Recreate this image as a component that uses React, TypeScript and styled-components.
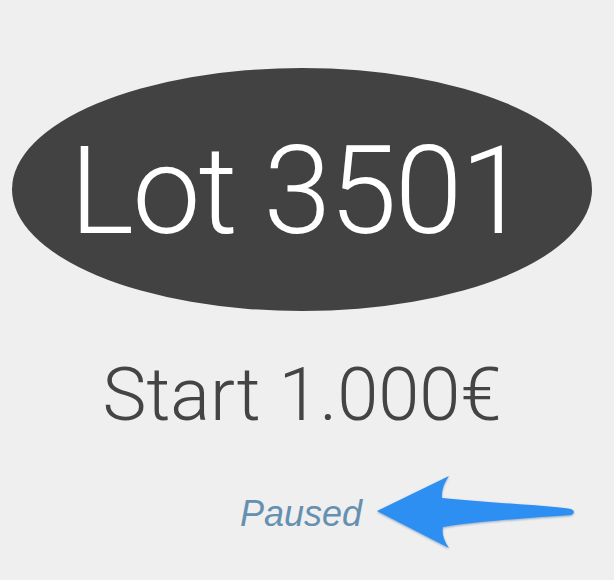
import React from "react";
import styled, { createGlobalStyle } from "styled-components";

const Global = createGlobalStyle`
  html, body { margin: 0; padding: 0; background: #efefef; }
  body { width: 614px; height: 580px; overflow: hidden; }
`;

const Page = styled.main`
  display: flex;
  flex-direction: column;
  align-items: flex-start;
  padding: 68px 0 0 12px;
  font-family: Roboto, "Noto Sans", sans-serif;
`;

const Badge = styled.div`
  width: 580px;
  height: 243px;
  border-radius: 50%;
  background: #424242;
  display: flex;
  align-items: center;
  justify-content: center;
  padding: 4px 8px 0 0;
  box-sizing: border-box;
`;

const LotTitle = styled.h1`
  margin: 0;
  font-weight: 300;
  font-size: 122px;
  letter-spacing: -2px;
  line-height: 1;
  color: #ffffff;
  white-space: nowrap;
`;

const StartPrice = styled.p`
  width: 580px;
  margin: 47px 0 0;
  text-align: center;
  font-weight: 300;
  font-size: 74px;
  line-height: 1;
  color: #444444;
  white-space: nowrap;
`;

const StatusRow = styled.div`
  display: flex;
  align-items: center;
  margin: 37px 0 0 228px;
`;

const StatusLabel = styled.span`
  font-family: "Liberation Sans", Arial, sans-serif;
  font-style: italic;
  font-size: 36px;
  color: #6690b0;
  line-height: 1;
`;

const Arrow = styled.svg`
  display: block;
  margin-left: 8px;
  filter: drop-shadow(0 1.5px 1px rgba(20, 80, 150, 0.45));
`;

export default function App() {
  return (
    <>
      <Global />
      <Page>
        <Badge>
          <LotTitle>Lot 3501</LotTitle>
        </Badge>
        <StartPrice>Start 1.000€</StartPrice>
        <StatusRow>
          <StatusLabel>Paused</StatusLabel>
          <Arrow width="215" height="90" viewBox="0 0 215 90">
            <path
              d="M7,42 L79,7 Q71,18 72,29 C110,33 170,36 201,40 Q207,43 201,46 C170,48 110,52 73,58 Q71,68 79,79 Z"
              fill="#2d8ff2"
            />
          </Arrow>
        </StatusRow>
      </Page>
    </>
  );
}
